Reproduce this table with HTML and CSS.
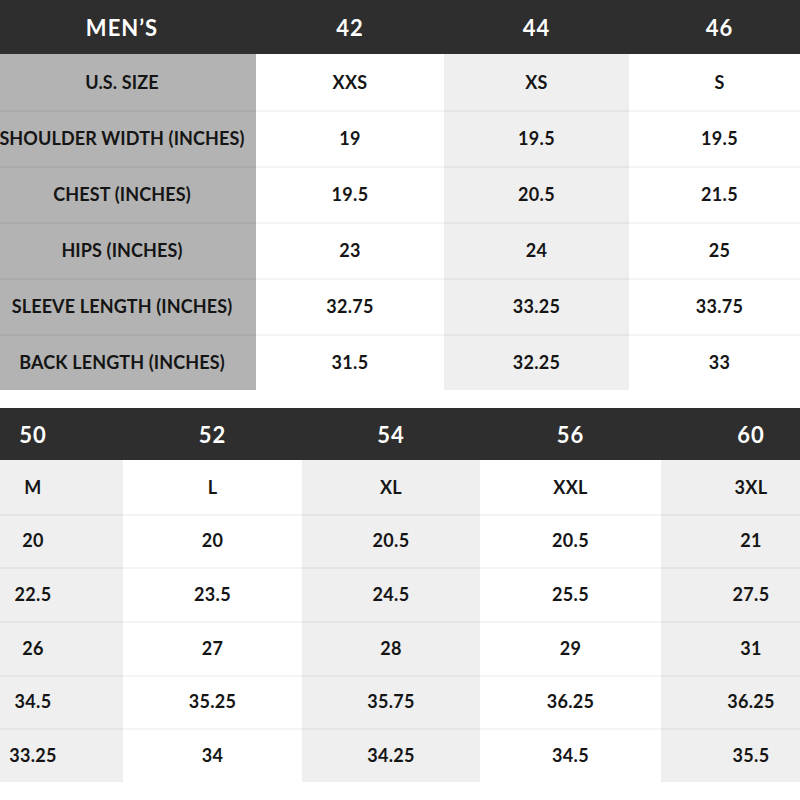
FILE: index.html
```html
<!DOCTYPE html>
<html>
<head>
<meta charset="utf-8">
<link rel="stylesheet" href="styles.css">
</head>
<body>
<div class="page">
  <div class="chart chart-top">
    <div class="cell head">MEN’S</div>
    <div class="cell head">42</div>
    <div class="cell head">44</div>
    <div class="cell head">46</div>

    <div class="cell label">U.S. SIZE</div>
    <div class="cell">XXS</div>
    <div class="cell shade">XS</div>
    <div class="cell">S</div>

    <div class="cell label line">SHOULDER WIDTH (INCHES)</div>
    <div class="cell line">19</div>
    <div class="cell shade line">19.5</div>
    <div class="cell line">19.5</div>

    <div class="cell label line">CHEST (INCHES)</div>
    <div class="cell line">19.5</div>
    <div class="cell shade line">20.5</div>
    <div class="cell line">21.5</div>

    <div class="cell label line">HIPS (INCHES)</div>
    <div class="cell line">23</div>
    <div class="cell shade line">24</div>
    <div class="cell line">25</div>

    <div class="cell label line">SLEEVE LENGTH (INCHES)</div>
    <div class="cell line">32.75</div>
    <div class="cell shade line">33.25</div>
    <div class="cell line">33.75</div>

    <div class="cell label line">BACK LENGTH (INCHES)</div>
    <div class="cell line">31.5</div>
    <div class="cell shade line">32.25</div>
    <div class="cell line">33</div>
  </div>

  <div class="chart chart-bottom">
    <div class="cell head">50</div>
    <div class="cell head">52</div>
    <div class="cell head">54</div>
    <div class="cell head">56</div>
    <div class="cell head">60</div>

    <div class="cell shade">M</div>
    <div class="cell">L</div>
    <div class="cell shade">XL</div>
    <div class="cell">XXL</div>
    <div class="cell shade">3XL</div>

    <div class="cell shade line">20</div>
    <div class="cell line">20</div>
    <div class="cell shade line">20.5</div>
    <div class="cell line">20.5</div>
    <div class="cell shade line">21</div>

    <div class="cell shade line">22.5</div>
    <div class="cell line">23.5</div>
    <div class="cell shade line">24.5</div>
    <div class="cell line">25.5</div>
    <div class="cell shade line">27.5</div>

    <div class="cell shade line">26</div>
    <div class="cell line">27</div>
    <div class="cell shade line">28</div>
    <div class="cell line">29</div>
    <div class="cell shade line">31</div>

    <div class="cell shade line">34.5</div>
    <div class="cell line">35.25</div>
    <div class="cell shade line">35.75</div>
    <div class="cell line">36.25</div>
    <div class="cell shade line">36.25</div>

    <div class="cell shade line">33.25</div>
    <div class="cell line">34</div>
    <div class="cell shade line">34.25</div>
    <div class="cell line">34.5</div>
    <div class="cell shade line">35.5</div>
  </div>
</div>
</body>
</html>
```

FILE: styles.css
```css
html, body {
  margin: 0;
  padding: 0;
  background: #ffffff;
  overflow: hidden;
}

.page {
  width: 800px;
  height: 800px;
  overflow: hidden;
  font-family: "Lato", "Liberation Sans", sans-serif;
  font-weight: 700;
  color: #151515;
}

.chart {
  display: grid;
}

.chart-top {
  margin-left: -12px;
  grid-template-columns: 268px 188px 185px 181px;
  grid-template-rows: 54px repeat(6, 56px);
}

.chart-bottom {
  margin-top: 18px;
  margin-left: -57px;
  grid-template-columns: 180px 179px 178px 181px 180px;
  grid-template-rows: 52px repeat(6, 53.67px);
}

.cell {
  display: flex;
  align-items: center;
  justify-content: center;
  font-size: 18px;
  letter-spacing: 0.3px;
  white-space: nowrap;
  background: #ffffff;
  box-sizing: border-box;
}

.label {
  background: #b3b3b3;
  letter-spacing: 0.12px;
}

.head {
  background: #2e2e2e;
  color: #ffffff;
  font-size: 22px;
  letter-spacing: 1px;
}

.shade {
  background: #efefef;
}

.line {
  box-shadow: inset 0 2px 0 rgba(0, 0, 0, 0.045);
}
```
